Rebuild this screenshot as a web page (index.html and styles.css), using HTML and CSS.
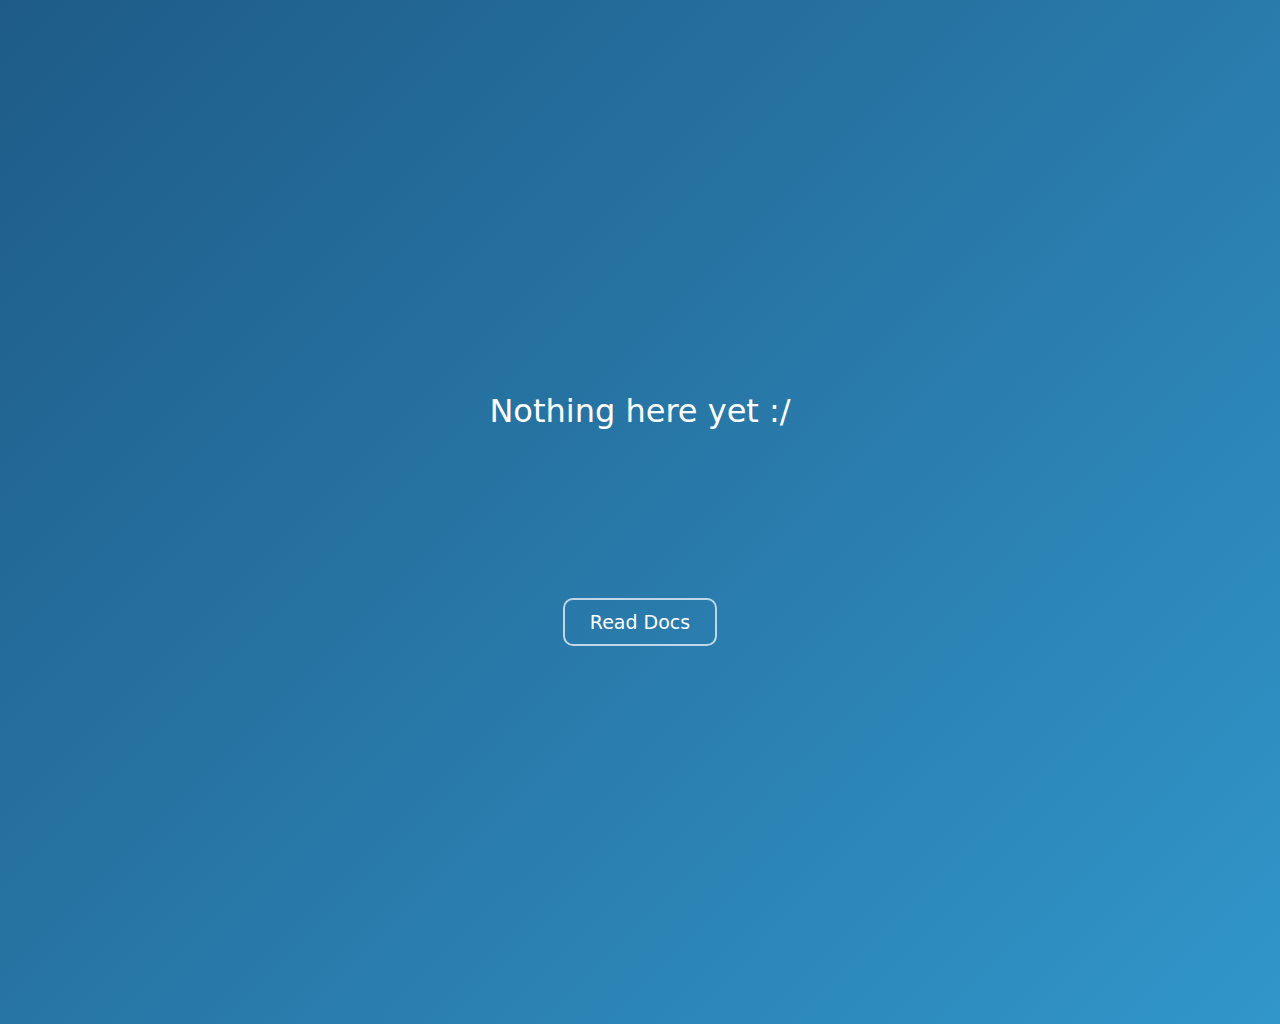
FILE: index.html
```html
<!DOCTYPE html>
<html lang="en">
<head>
<meta charset="utf-8">
<title>Nothing here yet</title>
<link rel="stylesheet" href="styles.css">
</head>
<body>
<main class="empty">
  <h1 class="empty-title">Nothing here yet :/</h1>
  <a class="docs-btn" href="#">Read Docs</a>
</main>
</body>
</html>
```
FILE: styles.css
```css
html, body {
  margin: 0;
  padding: 0;
  height: 100%;
}
body {
  background: linear-gradient(135deg, #1e5b88 0%, #2878a8 50%, #3196ca 100%);
  font-family: "DejaVu Sans", "Liberation Sans", sans-serif;
  color: #ffffff;
  min-height: 1024px;
}
.empty {
  display: flex;
  flex-direction: column;
  align-items: center;
  padding-top: 393px;
  gap: 168px;
}
.empty-title {
  margin: 0;
  font-size: 32px;
  font-weight: normal;
  line-height: 37px;
}
.docs-btn {
  display: inline-block;
  color: #ffffff;
  text-decoration: none;
  font-size: 19px;
  line-height: 24px;
  padding: 10px 25px;
  border: 2px solid rgba(255, 255, 255, 0.7);
  border-radius: 10px;
}
```
